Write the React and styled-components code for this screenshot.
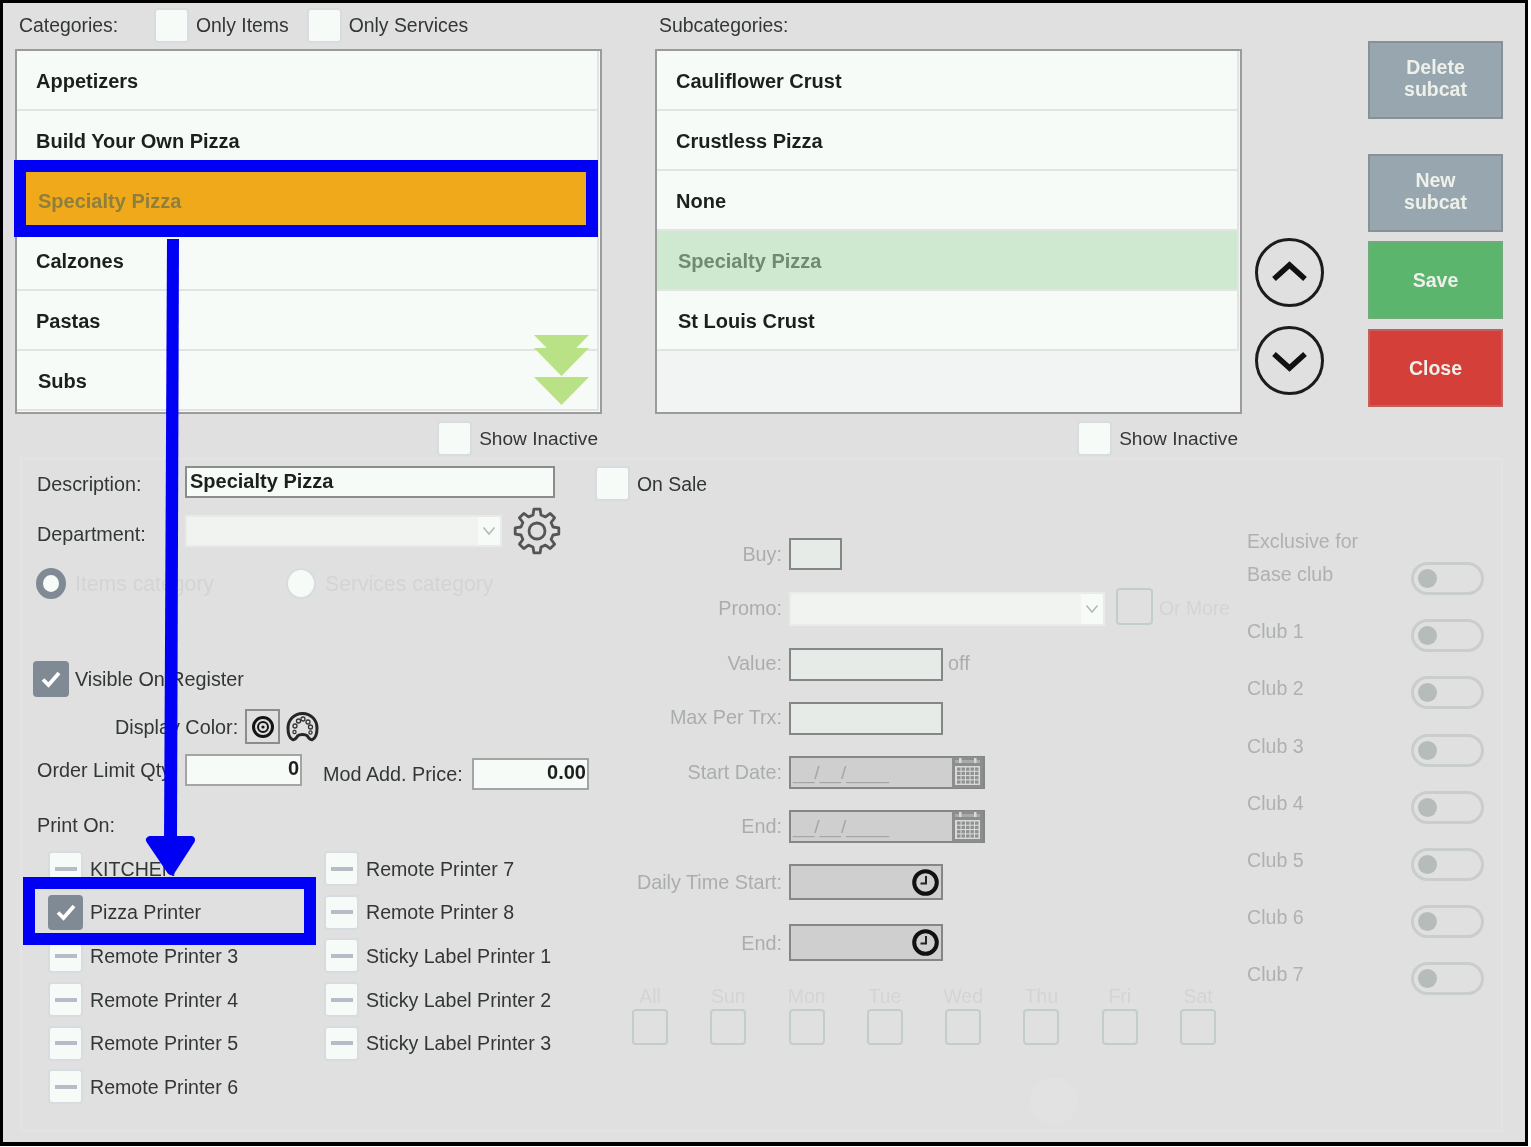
import React from "react";
import styled, { createGlobalStyle } from "styled-components";

const categories = ["Appetizers", "Build Your Own Pizza", "Specialty Pizza", "Calzones", "Pastas", "Subs"];
const subcategories = ["Cauliflower Crust", "Crustless Pizza", "None", "Specialty Pizza", "St Louis Crust"];
const printers = [
  "KITCHEN", "Pizza Printer", "Remote Printer 3", "Remote Printer 4", "Remote Printer 5", "Remote Printer 6",
  "Remote Printer 7", "Remote Printer 8", "Sticky Label Printer 1", "Sticky Label Printer 2", "Sticky Label Printer 3",
];
const days = ["All", "Sun", "Mon", "Tue", "Wed", "Thu", "Fri", "Sat"];
const clubs = ["Base club", "Club 1", "Club 2", "Club 3", "Club 4", "Club 5", "Club 6", "Club 7"];

const CheckMark = () => (
  <svg width="26" height="26" viewBox="0 0 26 26">
    <path d="M5 13.500l5.500 5.500L21 7" fill="none" stroke="#fff" strokeWidth="3.800" />
  </svg>
);

const Chevron = ({ up }) => (
  <svg width="69" height="69" viewBox="0 0 69 69">
    <circle cx="34.5" cy="34.5" r="33" fill="none" stroke="#1c1c1c" strokeWidth="3" />
    <path d={up ? "M19 41l15.500-14 15.500 14" : "M19 28l15.500 14 15.500-14"} fill="none" stroke="#111" strokeWidth="5.500" />
  </svg>
);

const SelectArrow = () => (
  <svg width="14" height="10" viewBox="0 0 14 10">
    <path d="M1.500 1.500L7 8l5.500-6.500" fill="none" stroke="#b4b8b6" strokeWidth="1.500" />
  </svg>
);

const gearPoints = () => {
  const pts = [];
  for (let i = 0; i < 8; i++) {
    const a = (i * 45 - 90) * (Math.PI / 180);
    const spots = [[16.5, -14], [22, -8], [22, 8], [16.5, 14]];
    spots.forEach(([r, d]) => {
      const t = a + d * (Math.PI / 180);
      pts.push(`${(24 + r * Math.cos(t)).toFixed(1)},${(24 + r * Math.sin(t)).toFixed(1)}`);
    });
  }
  return pts.join(" ");
};

const GearIcon = () => (
  <GearSvg width="48" height="48" viewBox="0 0 48 48">
    <polygon points={gearPoints()} fill="none" stroke="#555" strokeWidth="2.800" strokeLinejoin="round" />
    <circle cx="24" cy="24" r="8" fill="none" stroke="#555" strokeWidth="2.800" />
  </GearSvg>
);

const Target = () => (
  <svg width="24" height="24" viewBox="0 0 24 24">
    <circle cx="12" cy="12" r="9.500" fill="none" stroke="#141414" strokeWidth="3" />
    <circle cx="12" cy="12" r="5" fill="none" stroke="#141414" strokeWidth="2" />
    <circle cx="12" cy="12" r="1.600" fill="#141414" />
  </svg>
);

const Palette = () => (
  <svg width="33" height="32" viewBox="0 0 33 32">
    <path d="M16.500 2.500C8 2.500 2 9 2 17c0 5 1.500 10 4.500 11.500 3 1 4-2 5.500-4 1.500-1.500 7.500-1.500 9 0 1.500 2 2.500 5 5.500 4C29.500 27 31 22 31 17c0-8-6-14.500-14.500-14.500z" fill="none" stroke="#262626" strokeWidth="3" />
    <circle cx="9" cy="15" r="2" fill="none" stroke="#333" strokeWidth="1.300" />
    <circle cx="12.500" cy="10" r="2" fill="none" stroke="#333" strokeWidth="1.300" />
    <circle cx="17" cy="8" r="2" fill="none" stroke="#333" strokeWidth="1.300" />
    <circle cx="22" cy="11" r="2" fill="none" stroke="#333" strokeWidth="1.300" />
    <circle cx="24.500" cy="16" r="2" fill="none" stroke="#333" strokeWidth="1.300" />
    <circle cx="8.500" cy="21" r="1.600" fill="none" stroke="#333" strokeWidth="1.200" />
    <circle cx="24.500" cy="21.500" r="1.600" fill="none" stroke="#333" strokeWidth="1.200" />
  </svg>
);

const CalendarIcon = () => (
  <svg width="31" height="31" viewBox="0 0 31 31">
    <rect x="0" y="0" width="31" height="31" fill="#8b8e8c" />
    <rect x="3" y="9" width="25" height="19" fill="#d9d9d9" />
    <rect x="3" y="3" width="25" height="3" fill="#a9aba9" />
    <rect x="7" y="1" width="2.500" height="5" fill="#d9d9d9" />
    <rect x="22" y="1" width="2.500" height="5" fill="#d9d9d9" />
    {[0, 1, 2, 3].map((r) =>
      [0, 1, 2, 3, 4].map((c) => (
        <rect key={`${r}-${c}`} x={5 + c * 4.500} y={10.500 + r * 4.300} width="3.500" height="3.200" fill="#8f9290" />
      ))
    )}
  </svg>
);

const ClockIcon = () => (
  <svg width="27" height="27" viewBox="0 0 27 27">
    <circle cx="13.500" cy="13.500" r="11.300" fill="none" stroke="#111" strokeWidth="4" />
    <path d="M14 7v7.500H8.500" fill="none" stroke="#222" strokeWidth="2" />
  </svg>
);

const GlobalStyle = createGlobalStyle`
  html, body {
    margin: 0;
    padding: 0;
    background: #fff;
  }
  * {
    box-sizing: border-box;
  }
`;

const Page = styled.div`
  position: relative;
  width: 1528px;
  height: 1147px;
  font-family: "Liberation Sans", Arial, sans-serif;
  font-size: 19.800px;
  line-height: 24px;
  color: #333636;
  filter: blur(0.55px);
`;

const Frame = styled.div`
  width: 100%;
  height: 1146px;
  background: #e0e0e0;
  border: 3px solid #000;
  border-bottom-width: 4px;
  overflow: hidden;
`;

const Annotations = styled.svg`
  position: absolute;
  top: 0;
  left: 0;
  pointer-events: none;
`;

const TopArea = styled.div`
  display: flex;
  height: 455px;
  padding-left: 12px;
`;

const ListColumn = styled.div`
  width: 587px;
  flex-shrink: 0;
  margin-left: ${(p) => p.$ml || 0}px;
`;

const ListHeader = styled.div`
  display: flex;
  align-items: center;
  height: 44px;
  margin-bottom: 2px;
  padding-left: 4px;
  font-size: 19.400px;
  white-space: nowrap;
`;

const HeaderLabel = styled.span`
  width: 135px;
  flex-shrink: 0;
`;

const Check = styled.span`
  width: ${(p) => p.$size || 35}px;
  height: ${(p) => p.$size || 35}px;
  flex-shrink: 0;
  display: flex;
  align-items: center;
  justify-content: center;
  margin-left: ${(p) => p.$ml || 0}px;
  margin-top: ${(p) => p.$mt || 0}px;
  background: ${(p) => (p.$on ? "#7f8a94" : p.$off ? "transparent" : "#f7fbf8")};
  border: 2px solid ${(p) => (p.$on ? "#7f8a94" : p.$off ? "#c3cdcd" : "#d6dce0")};
  border-radius: 4px;
`;

const Dash = styled.span`
  width: 22px;
  height: 4px;
  background: #b6bdc9;
`;

const CheckLabel = styled.span`
  margin-left: ${(p) => p.$gap || 7}px;
  margin-right: ${(p) => p.$mr || 0}px;
`;

const List = styled.div`
  position: relative;
  height: 365px;
  background: ${(p) => p.$bg || "#f7fbf8"};
  border: 2px solid #9b9b9b;
  padding-right: 1px;
`;

const Row = styled.div`
  height: 60px;
  display: flex;
  align-items: center;
  padding-left: ${(p) => p.$inset || 19}px;
  padding-top: 2px;
  border-bottom: 2px solid #e2e4e3;
  border-right: 2px solid #e2e4e3;
  font-size: 20px;
  font-weight: bold;
  color: ${(p) => p.$color || "#1d1f1f"};
  background: ${(p) => p.$bg || "#f7fbf8"};
`;

const ScrollHint = styled.svg`
  position: absolute;
  left: 517px;
  top: 284px;
`;

const ListFooter = styled.div`
  display: flex;
  justify-content: flex-end;
  align-items: center;
  height: 35px;
  margin-top: 7px;
  padding-right: 4px;
  font-size: 19.100px;
`;

const ArrowColumn = styled.div`
  display: flex;
  flex-direction: column;
  gap: 19px;
  margin-left: 13px;
  padding-top: 235px;
`;

const ButtonColumn = styled.div`
  display: flex;
  flex-direction: column;
  width: 135px;
  margin-left: 44px;
  padding-top: 38px;
`;

const ActionButton = styled.button`
  height: 78px;
  margin-top: ${(p) => p.$mt || 0}px;
  padding: 0 0 ${(p) => p.$lift || 0}px;
  background: ${(p) => p.$bg};
  border: 2px solid ${(p) => p.$edge};
  color: ${(p) => p.$color || "#eef0ea"};
  font-family: inherit;
  font-size: 19.500px;
  line-height: 22px;
  font-weight: bold;
`;

const Panel = styled.div`
  display: flex;
  width: 1483px;
  height: 674px;
  margin-left: 17px;
  box-shadow: inset 0 0 0 2px #e3e3e3;
`;

const LeftColumn = styled.div`
  width: 600px;
  flex-shrink: 0;
  padding: 8px 0 0 17px;
  white-space: nowrap;
`;

const FormRow = styled.div`
  display: flex;
  align-items: center;
  height: ${(p) => p.$h}px;
  margin-top: ${(p) => p.$mt || 0}px;
  margin-left: ${(p) => p.$ml || 0}px;
`;

const RowLabel = styled.span`
  width: 148px;
  flex-shrink: 0;
  padding-top: ${(p) => p.$dy || 0}px;
`;

const TextInput = styled.div`
  width: ${(p) => p.$w}px;
  height: ${(p) => p.$h || 32}px;
  flex-shrink: 0;
  padding: 0 ${(p) => (p.$right ? 1 : 3)}px;
  background: #f7fbf8;
  border: 2px solid ${(p) => p.$edge || "#a3a5a4"};
  font-size: 20px;
  font-weight: bold;
  color: #1d1f1f;
  line-height: ${(p) => (p.$right ? 25 : 26)}px;
  text-align: ${(p) => (p.$right ? "right" : "left")};
`;

const SelectBox = styled.div`
  display: flex;
  justify-content: space-between;
  width: ${(p) => p.$w}px;
  height: ${(p) => p.$h}px;
  flex-shrink: 0;
  background: #f7fbf8;
  border: 2px solid #e9ebe9;
`;

const SelectValue = styled.span`
  flex: 1;
  background: #f0f3f0;
`;

const SelectButton = styled.span`
  width: 22px;
  display: flex;
  align-items: center;
  justify-content: center;
`;

const GearSvg = styled.svg`
  margin-left: 11px;
`;

const OnSale = styled.span`
  display: flex;
  align-items: center;
  margin-left: 40px;
  margin-top: 3px;
  font-size: 19.400px;
`;

const Radio = styled.span`
  width: 30px;
  height: 31px;
  flex-shrink: 0;
  border-radius: 50%;
  background: #f7fbf8;
  border: ${(p) => (p.$on ? "7px solid #7f8a94" : "2px solid #d6dce0")};
`;

const FaintText = styled.span`
  width: ${(p) => p.$w}px;
  flex-shrink: 0;
  margin-left: 9px;
  font-size: 21.200px;
  color: #d2d5d3;
`;

const ColorLabel = styled.span`
  width: 130px;
  flex-shrink: 0;
`;

const ColorBox = styled.span`
  width: 35px;
  height: 35px;
  display: flex;
  align-items: center;
  justify-content: center;
  border: 2px solid #8b8d8c;
`;

const PaletteSlot = styled.span`
  display: flex;
  margin-left: 6px;
`;

const OrderRow = styled.div`
  display: flex;
  align-items: flex-start;
  margin-top: 10px;
`;

const OrderGroup = styled.div`
  display: flex;
  align-items: center;
  height: 32px;
  margin-top: ${(p) => p.$mt || 0}px;
  margin-left: ${(p) => p.$ml || 0}px;
`;

const ModLabel = styled.span`
  width: 149px;
`;

const PrinterGrid = styled.div`
  display: grid;
  grid-auto-flow: column;
  grid-template-columns: 276px 1fr;
  grid-template-rows: repeat(6, 35px);
  row-gap: 8.700px;
  margin: 14px 0 0 11px;
  font-size: 19.600px;
`;

const PrinterItem = styled.div`
  display: flex;
  align-items: center;
`;

const MiddleColumn = styled.div`
  width: 615px;
  flex-shrink: 0;
  padding-top: 80px;
  white-space: nowrap;
`;

const FieldRow = styled.div`
  display: flex;
  align-items: center;
  height: ${(p) => p.$h}px;
  margin-top: ${(p) => p.$mt || 0}px;
`;

const FieldLabel = styled.span`
  width: 162px;
  flex-shrink: 0;
  margin-right: 7px;
  padding-bottom: ${(p) => p.$up || 0}px;
  text-align: right;
  color: #aaaeab;
`;

const DimInput = styled.div`
  display: flex;
  align-items: center;
  justify-content: space-between;
  width: ${(p) => p.$w}px;
  height: 100%;
  flex-shrink: 0;
  background: ${(p) => p.$bg || "#e7ebe8"};
  border: 2px solid #838785;
`;

const DateMask = styled.span`
  margin-left: 2px;
  font-size: 19.200px;
  color: #a3a6a4;
`;

const ClockSlot = styled.span`
  display: flex;
  margin-right: 2px;
`;

const OffText = styled.span`
  margin-left: 5px;
  padding-bottom: 3px;
  color: #aaaeab;
`;

const OrMoreText = styled.span`
  margin-left: 6px;
  padding-bottom: 2px;
  font-size: 19.400px;
  color: #d2d5d3;
`;

const DayGrid = styled.div`
  display: grid;
  grid-template-columns: repeat(8, 36px);
  column-gap: 42.300px;
  justify-items: center;
  margin: 23px 0 0 12px;
  font-size: 19.400px;
`;

const DayName = styled.span`
  margin-bottom: 1px;
  color: #d2d5d3;
`;

const FaintCircle = styled.div`
  width: 48px;
  height: 48px;
  margin: 32px 0 0 410px;
  border-radius: 50%;
  background: #e2e2e2;
`;

const RightColumn = styled.div`
  width: 249px;
  padding: 71px 0 0 12px;
  font-size: 19.600px;
  color: #aeb2af;
`;

const ClubTitle = styled.div`
  height: 24px;
  margin-bottom: 9px;
`;

const ClubList = styled.div`
  display: flex;
  flex-direction: column;
  gap: 24.200px;
`;

const ClubRow = styled.div`
  display: flex;
  justify-content: space-between;
  height: 33px;
`;

const Toggle = styled.span`
  display: flex;
  align-items: center;
  width: 73px;
  height: 33px;
  padding-left: 4px;
  border: 3px solid #c9cdcc;
  border-radius: 17px;
`;

const Knob = styled.span`
  width: 19px;
  height: 19px;
  border-radius: 50%;
  background: #b6bcb9;
`;

const App = () => {
  return (
    <Page>
      <GlobalStyle />
      <Frame>
        <TopArea>
          <ListColumn>
            <ListHeader>
              <HeaderLabel>Categories:</HeaderLabel>
              <Check />
              <CheckLabel $mr={18}>Only Items</CheckLabel>
              <Check />
              <CheckLabel>Only Services</CheckLabel>
            </ListHeader>
            <List>
              {categories.map((name, i) => (
                <Row
                  key={name}
                  $bg={i === 2 ? "#f0a91b" : undefined}
                  $color={i === 2 ? "#8f7f3c" : undefined}
                  $inset={i === 2 || i === 5 ? 21 : 19}
                >
                  {name}
                </Row>
              ))}
              <ScrollHint width="55" height="72" viewBox="0 0 55 72">
                <path d="M0 0h55L27.500 28z" fill="#b9e186" />
                <path d="M0 13h55L27.500 41z" fill="#b9e186" />
                <path d="M0 42h55L27.500 70z" fill="#b9e186" />
              </ScrollHint>
            </List>
            <ListFooter>
              <Check />
              <CheckLabel>Show Inactive</CheckLabel>
            </ListFooter>
          </ListColumn>

          <ListColumn $ml={53}>
            <ListHeader>Subcategories:</ListHeader>
            <List $bg="#f1f4f2">
              {subcategories.map((name, i) => (
                <Row
                  key={name}
                  $bg={i === 3 ? "#cfe8d0" : undefined}
                  $color={i === 3 ? "#6f8a72" : undefined}
                  $inset={i >= 3 ? 21 : 19}
                >
                  {name}
                </Row>
              ))}
            </List>
            <ListFooter>
              <Check />
              <CheckLabel>Show Inactive</CheckLabel>
            </ListFooter>
          </ListColumn>

          <ArrowColumn>
            <Chevron up />
            <Chevron />
          </ArrowColumn>

          <ButtonColumn>
            <ActionButton $bg="#98a6af" $edge="#8a9196" $lift={4}>Delete<br />subcat</ActionButton>
            <ActionButton $bg="#98a6af" $edge="#8a9196" $mt={35} $lift={4}>New<br />subcat</ActionButton>
            <ActionButton $bg="#5cb56d" $edge="#74a97c" $mt={9}>Save</ActionButton>
            <ActionButton $bg="#d43f3a" $edge="#c4605c" $mt={10}>Close</ActionButton>
          </ButtonColumn>
        </TopArea>

        <Panel>
          <LeftColumn>
            <FormRow $h={32}>
              <RowLabel $dy={4}>Description:</RowLabel>
              <TextInput $w={370} $edge="#8b8d8c">Specialty Pizza</TextInput>
              <OnSale>
                <Check />
                <CheckLabel>On Sale</CheckLabel>
              </OnSale>
            </FormRow>
            <FormRow $h={48} $mt={9}>
              <RowLabel $dy={6}>Department:</RowLabel>
              <SelectBox $w={317} $h={32}>
                <SelectValue />
                <SelectButton><SelectArrow /></SelectButton>
              </SelectBox>
              <GearIcon />
            </FormRow>
            <FormRow $h={31} $mt={13} $ml={-1}>
              <Radio $on />
              <FaintText $w={211}>Items category</FaintText>
              <Radio />
              <FaintText $w={200}>Services category</FaintText>
            </FormRow>
            <FormRow $h={36} $mt={62} $ml={-4}>
              <Check $size={36} $on><CheckMark /></Check>
              <CheckLabel $gap={6}>Visible On Register</CheckLabel>
            </FormRow>
            <FormRow $h={35} $mt={12} $ml={78}>
              <ColorLabel>Display Color:</ColorLabel>
              <ColorBox><Target /></ColorBox>
              <PaletteSlot><Palette /></PaletteSlot>
            </FormRow>
            <OrderRow>
              <OrderGroup>
                <RowLabel>Order Limit Qty</RowLabel>
                <TextInput $w={117} $right>0</TextInput>
              </OrderGroup>
              <OrderGroup $mt={4} $ml={21}>
                <ModLabel>Mod Add. Price:</ModLabel>
                <TextInput $w={117} $right>0.00</TextInput>
              </OrderGroup>
            </OrderRow>
            <FormRow $h={24} $mt={23}>Print On:</FormRow>
            <PrinterGrid>
              {printers.map((name) => (
                <PrinterItem key={name}>
                  <Check $on={name === "Pizza Printer"}>
                    {name === "Pizza Printer" ? <CheckMark /> : <Dash />}
                  </Check>
                  <CheckLabel>{name}</CheckLabel>
                </PrinterItem>
              ))}
            </PrinterGrid>
          </LeftColumn>

          <MiddleColumn>
            <FieldRow $h={32}>
              <FieldLabel>Buy:</FieldLabel>
              <DimInput $w={53} />
            </FieldRow>
            <FieldRow $h={34} $mt={22}>
              <FieldLabel $up={2}>Promo:</FieldLabel>
              <SelectBox $w={316} $h={34}>
                <SelectValue />
                <SelectButton><SelectArrow /></SelectButton>
              </SelectBox>
              <Check $size={37} $off $ml={11} $mt={-6} />
              <OrMoreText>Or More</OrMoreText>
            </FieldRow>
            <FieldRow $h={33} $mt={22}>
              <FieldLabel $up={3}>Value:</FieldLabel>
              <DimInput $w={154} />
              <OffText>off</OffText>
            </FieldRow>
            <FieldRow $h={33} $mt={21}>
              <FieldLabel $up={3}>Max Per Trx:</FieldLabel>
              <DimInput $w={154} />
            </FieldRow>
            <FieldRow $h={33} $mt={21}>
              <FieldLabel $up={2}>Start Date:</FieldLabel>
              <DimInput $w={196} $bg="#cfcfcf">
                <DateMask>__/__/____</DateMask>
                <CalendarIcon />
              </DimInput>
            </FieldRow>
            <FieldRow $h={33} $mt={21}>
              <FieldLabel $up={2}>End:</FieldLabel>
              <DimInput $w={196} $bg="#cfcfcf">
                <DateMask>__/__/____</DateMask>
                <CalendarIcon />
              </DimInput>
            </FieldRow>
            <FieldRow $h={36} $mt={21}>
              <FieldLabel>Daily Time Start:</FieldLabel>
              <DimInput $w={154} $bg="#cfcfcf">
                <span />
                <ClockSlot><ClockIcon /></ClockSlot>
              </DimInput>
            </FieldRow>
            <FieldRow $h={37} $mt={24}>
              <FieldLabel>End:</FieldLabel>
              <DimInput $w={154} $bg="#cfcfcf">
                <span />
                <ClockSlot><ClockIcon /></ClockSlot>
              </DimInput>
            </FieldRow>
            <DayGrid>
              {days.map((day) => (
                <DayName key={day}>{day}</DayName>
              ))}
              {days.map((day) => (
                <Check key={day} $size={36} $off />
              ))}
            </DayGrid>
            <FaintCircle />
          </MiddleColumn>

          <RightColumn>
            <ClubTitle>Exclusive for</ClubTitle>
            <ClubList>
              {clubs.map((club) => (
                <ClubRow key={club}>
                  {club}
                  <Toggle><Knob /></Toggle>
                </ClubRow>
              ))}
            </ClubList>
          </RightColumn>
        </Panel>
      </Frame>

      <Annotations width="1528" height="1147" viewBox="0 0 1528 1147">
        <rect x="20" y="166" width="572" height="65" fill="none" stroke="#0000f5" strokeWidth="12" />
        <polygon points="167,239 179,239 177,842 164,842" fill="#0000f5" />
        <polygon points="150,840 191,840 171,871" fill="#0000f5" stroke="#0000f5" strokeWidth="8" strokeLinejoin="round" />
        <rect x="29" y="883" width="281" height="56" fill="none" stroke="#0000f5" strokeWidth="12" />
      </Annotations>
    </Page>
  );
};

export default App;
